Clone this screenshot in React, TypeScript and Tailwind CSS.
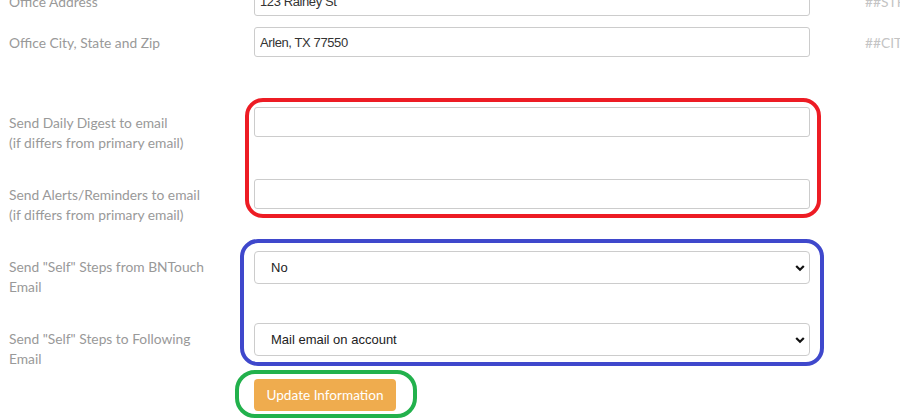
import React from "react";

const labelCls =
  "w-[254px] shrink-0 pl-[9px] pt-[6px] text-[13.8px] leading-[20px] text-[#999] [font-family:Lato,'Open_Sans',sans-serif]";
const inputCls =
  "w-[556px] shrink-0 h-[30px] rounded-[3px] border border-[#ccc] bg-white px-[5px] text-[13px] tracking-[-0.4px] text-[#333] [font-family:'Liberation_Sans',Arial,sans-serif] outline-none";
const hintCls =
  "ml-[55px] pt-[6px] whitespace-nowrap text-[13.8px] leading-[20px] text-[#c4c4c4] [font-family:Lato,sans-serif]";

function Chevron() {
  return (
    <svg
      className="pointer-events-none absolute right-[5px] top-1/2 -translate-y-1/2"
      width="10"
      height="8"
      viewBox="0 0 10 8"
    >
      <path d="M1.2 2 L5 5.8 L8.8 2" fill="none" stroke="#111" strokeWidth="2.2" />
    </svg>
  );
}

function SelectBox({ value }: { value: string }) {
  return (
    <div className="relative w-[556px] shrink-0 h-[33px]">
      <select
        defaultValue={value}
        className="h-full w-full appearance-none rounded-[4px] border border-[#ccc] bg-white pl-[16px] text-[13px] text-[#222] [font-family:'Liberation_Sans',Arial,sans-serif] outline-none"
      >
        <option>{value}</option>
      </select>
      <Chevron />
    </div>
  );
}

export default function App() {
  return (
    <div className="relative h-[420px] w-[900px] overflow-hidden bg-white">
      <div className="-mt-[14px] flex flex-col">
        <div className="flex h-[41px] items-start">
          <div className={labelCls}>Office Address</div>
          <input className={inputCls} defaultValue="123 Rainey St" />
          <div className={hintCls}>##STREET##</div>
        </div>
        <div className="flex h-[80px] items-start">
          <div className={labelCls}>Office City, State and Zip</div>
          <input className={inputCls} defaultValue="Arlen, TX 77550" />
          <div className={hintCls}>##CITYSTATEZIP##</div>
        </div>
        <div className="flex h-[72px] items-start">
          <div className={labelCls}>
            Send Daily Digest to email
            <br />
            (if differs from primary email)
          </div>
          <input className={inputCls + " h-[29px]"} defaultValue="" />
        </div>
        <div className="flex h-[72px] items-start">
          <div className={labelCls}>
            Send Alerts/Reminders to email
            <br />
            (if differs from primary email)
          </div>
          <input className={inputCls + " h-[29px]"} defaultValue="" />
        </div>
        <div className="flex h-[72px] items-start">
          <div className={labelCls}>
            Send "Self" Steps from BNTouch
            <br />
            Email
          </div>
          <SelectBox value="No" />
        </div>
        <div className="flex h-[56px] items-start">
          <div className={labelCls}>
            Send "Self" Steps to Following
            <br />
            Email
          </div>
          <SelectBox value="Mail email on account" />
        </div>
        <div className="flex items-start">
          <div className="w-[254px] shrink-0" />
          <button className="h-[32px] w-[142px] rounded-[4px] bg-[#efac4e] text-[13.6px] text-white [font-family:Lato,sans-serif]">
            Update Information
          </button>
        </div>
      </div>

      {/* annotation marks */}
      <div className="pointer-events-none absolute left-[245px] top-[98px] h-[120px] w-[576px] rounded-[18px] border-[4px] border-[#ed1c24]" />
      <div className="pointer-events-none absolute left-[240px] top-[239px] h-[127px] w-[584px] rounded-[18px] border-[4px] border-[#3f48cc]" />
      <div className="pointer-events-none absolute left-[235px] top-[370px] h-[48px] w-[182px] rounded-[20px] border-[4px] border-[#22b14c]" />
    </div>
  );
}
